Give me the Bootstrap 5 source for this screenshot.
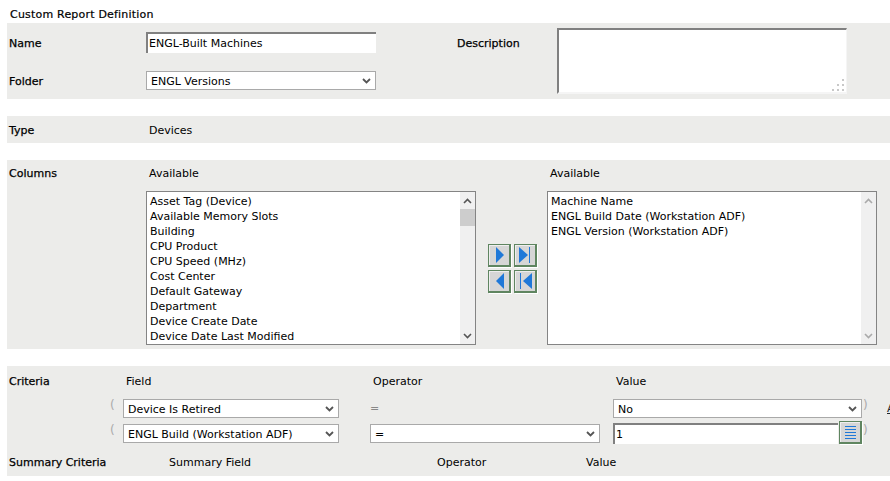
<!DOCTYPE html>
<html lang="en"><head><meta charset="utf-8"><title>Custom Report Definition</title>
<link href="https://cdn.jsdelivr.net/npm/bootstrap@5.3.0/dist/css/bootstrap.min.css" rel="stylesheet">
<style>
html,body{overflow:hidden;height:481px}
body{background:#fff;color:#000;font:11px/15px "DejaVu Sans",sans-serif;padding:6px 0 0 7px;width:890px}
.rd-title{height:17px;padding:1px 0 0 3px;letter-spacing:.2px;-webkit-text-stroke:.2px #000}
.rd-band{background:#ececea;width:883px;overflow:hidden}
.rd-gap{margin-top:17px}
.rd-lbl{-webkit-text-stroke:.25px #000;padding-left:2px}
.rd-nudge{padding-top:2px}
.w139{width:139px;flex:none}
.rd-col{padding-left:3px}
.rd-in{display:block;flex:none;border:0;border-top:2px solid #808080;border-left:2px solid #808080;background:#fff;font:inherit;color:#000;padding:0;outline:0}
.rd-name{width:230px;height:21px;padding-left:1px}
.rd-sel{display:block;flex:none;appearance:none;-webkit-appearance:none;background:#fff url("data:image/svg+xml,%3Csvg xmlns='http://www.w3.org/2000/svg' width='9' height='6'%3E%3Cpath d='M1 1l3.500 3.500L8 1' fill='none' stroke='%23555' stroke-width='1.800'/%3E%3C/svg%3E") no-repeat right 4px center;border:1px solid #a9a9a9;border-radius:0;font:inherit;color:#000;height:19px;padding:2px 14px 0 4px;outline:0;margin:0}
.rd-descwrap{position:relative;width:290px;height:66px;margin-top:5px;flex:none}
.rd-desc{width:290px;height:66px;resize:none;border-right:1px solid #f5f5f5;border-bottom:2px solid #f5f5f5}
.rd-grip{position:absolute;right:3px;bottom:3px;display:block}
.rd-list{width:330px;height:154px;border:1px solid #848484;background:#fff;display:flex;flex:none}
.rd-items{flex:1;padding:2px 3px;overflow:hidden;white-space:nowrap}
.rd-track{width:15px;background:#f0f0f0;display:flex;flex-direction:column;justify-content:space-between;position:relative}
.rd-thumb{position:absolute;left:0;right:0;top:17px;height:17px;background:#cdcdcd}
.rd-arw{height:17px;display:flex;align-items:center;justify-content:center}
.rd-btn{width:23px;height:23px;flex:none;background:#d6d6d6;border:1px solid #5f8560;border-right:2px solid #5f8560;border-bottom:2px solid #5f8560;box-shadow:inset 1px 1px 0 #eee,1px 1px 0 #fff;padding:0;display:flex;align-items:center;justify-content:center;border-radius:0}
.rd-paren{width:13px;flex:none;color:#aaa;font-size:12px;line-height:13px;margin-top:-6px}
.rd-pl{padding-left:2px}
</style></head><body>
<div class="rd-title">Custom Report Definition</div>
<div class="rd-band d-flex" style="height:76px">
  <div class="d-flex flex-column" style="width:448px">
    <div class="d-flex align-items-center" style="margin-top:9px;height:21px"><div class="rd-lbl rd-nudge w139">Name</div><input class="rd-in rd-name" value="ENGL-Built Machines"></div>
    <div class="d-flex align-items-center" style="margin-top:18px;height:19px"><div class="rd-lbl rd-nudge w139">Folder</div><select class="rd-sel" style="width:230px"><option>ENGL Versions</option></select></div>
  </div>
  <div class="rd-lbl" style="width:102px;margin-top:13px">Description</div>
  <div class="rd-descwrap"><textarea class="rd-in rd-desc"></textarea>
    <svg class="rd-grip" width="12" height="12" fill="#c8c8c8"><rect x="10" y="0" width="2" height="2"/><rect x="5" y="5" width="2" height="2"/><rect x="10" y="5" width="2" height="2"/><rect x="0" y="10" width="2" height="2"/><rect x="5" y="10" width="2" height="2"/><rect x="10" y="10" width="2" height="2"/></svg></div>
</div>
<div class="rd-band rd-gap d-flex align-items-center" style="height:27px"><div class="rd-lbl rd-nudge w139">Type</div><div class="rd-col rd-nudge">Devices</div></div>
<div class="rd-band rd-gap" style="height:189px;padding-top:6px">
  <div class="d-flex"><div class="rd-lbl w139">Columns</div><div class="rd-col" style="width:401px">Available</div><div class="rd-col">Available</div></div>
  <div class="d-flex align-items-center" style="margin-top:10px;padding-left:139px">
    <div class="rd-list">
      <div class="rd-items">Asset Tag (Device)<br>Available Memory Slots<br>Building<br>CPU Product<br>CPU Speed (MHz)<br>Cost Center<br>Default Gateway<br>Department<br>Device Create Date<br>Device Date Last Modified</div>
      <div class="rd-track"><div class="rd-arw"><svg width="9" height="6"><path d="M1 5l3.500-3.500L8 5" fill="none" stroke="#555" stroke-width="1.600"/></svg></div><div class="rd-thumb"></div><div class="rd-arw"><svg width="9" height="6"><path d="M1 1l3.500 3.500L8 1" fill="none" stroke="#555" stroke-width="1.600"/></svg></div></div>
    </div>
    <div class="d-flex flex-column" style="gap:3px;margin:0 10px 0 12px">
      <div class="d-flex" style="gap:3px">
        <button class="rd-btn" aria-label="Add"><svg width="9" height="16"><path d="M1 0l8 8-8 8z" fill="#1f78d8"/></svg></button>
        <button class="rd-btn" aria-label="Add all"><svg width="13" height="16"><path d="M0 0l9 8-9 8z" fill="#1f78d8"/><path d="M10.500 0v16" stroke="#1f78d8"/></svg></button>
      </div>
      <div class="d-flex" style="gap:3px">
        <button class="rd-btn" aria-label="Remove"><svg width="9" height="16"><path d="M9 0L1 8l8 8z" fill="#1f78d8"/></svg></button>
        <button class="rd-btn" aria-label="Remove all"><svg width="13" height="16"><path d="M13 0L4 8l9 8z" fill="#1f78d8"/><path d="M1.500 0v16" stroke="#1f78d8"/></svg></button>
      </div>
    </div>
    <div class="rd-list">
      <div class="rd-items">Machine Name<br>ENGL Build Date (Workstation ADF)<br>ENGL Version (Workstation ADF)</div>
      <div class="rd-track"><div class="rd-arw"><svg width="9" height="6"><path d="M1 5l3.500-3.500L8 5" fill="none" stroke="#aaa" stroke-width="1.600"/></svg></div><div class="rd-arw"><svg width="9" height="6"><path d="M1 1l3.500 3.500L8 1" fill="none" stroke="#aaa" stroke-width="1.600"/></svg></div></div>
    </div>
  </div>
</div>
<div class="rd-band rd-gap" style="height:110px;padding-top:8px">
  <div class="d-flex"><div class="rd-lbl" style="width:117px">Criteria</div><div class="rd-pl" style="width:247px">Field</div><div class="rd-pl" style="width:243px">Operator</div><div class="rd-pl">Value</div></div>
  <div class="d-flex align-items-center" style="margin-top:10px;height:19px;padding-left:103px">
    <div class="rd-paren">(</div>
    <select class="rd-sel" style="width:216px"><option>Device Is Retired</option></select>
    <div style="flex:none;width:274px;padding-left:31px;color:#888">=</div>
    <select class="rd-sel" style="width:249px"><option>No</option></select>
    <div class="rd-paren" style="margin-left:1px;width:24px">)</div>
    <a href="#" class="text-dark">A</a>
  </div>
  <div class="d-flex align-items-center" style="margin-top:6px;height:19px;padding-left:103px">
    <div class="rd-paren">(</div>
    <select class="rd-sel" style="width:216px"><option>ENGL Build (Workstation ADF)</option></select>
    <div style="flex:none;width:31px"></div>
    <select class="rd-sel" style="width:230px"><option>=</option></select>
    <div style="flex:none;width:13px"></div>
    <input class="rd-in" value="1" style="width:225px;height:21px;padding-left:1px">
    <button class="rd-btn" style="margin-left:1px;height:23px;margin-top:-3px" aria-label="Lookup"><svg width="11" height="14"><path d="M0 1.500h11M0 4.500h11M0 7.500h11M0 10.500h11M0 13.500h11" stroke="#1f78d8"/></svg></button>
    <div class="rd-paren" style="margin-left:1px">)</div>
  </div>
  <div class="d-flex" style="margin-top:12px"><div class="rd-lbl" style="width:162px">Summary Criteria</div><div style="width:268px">Summary Field</div><div style="width:149px">Operator</div><div>Value</div></div>
</div>
</body></html>
